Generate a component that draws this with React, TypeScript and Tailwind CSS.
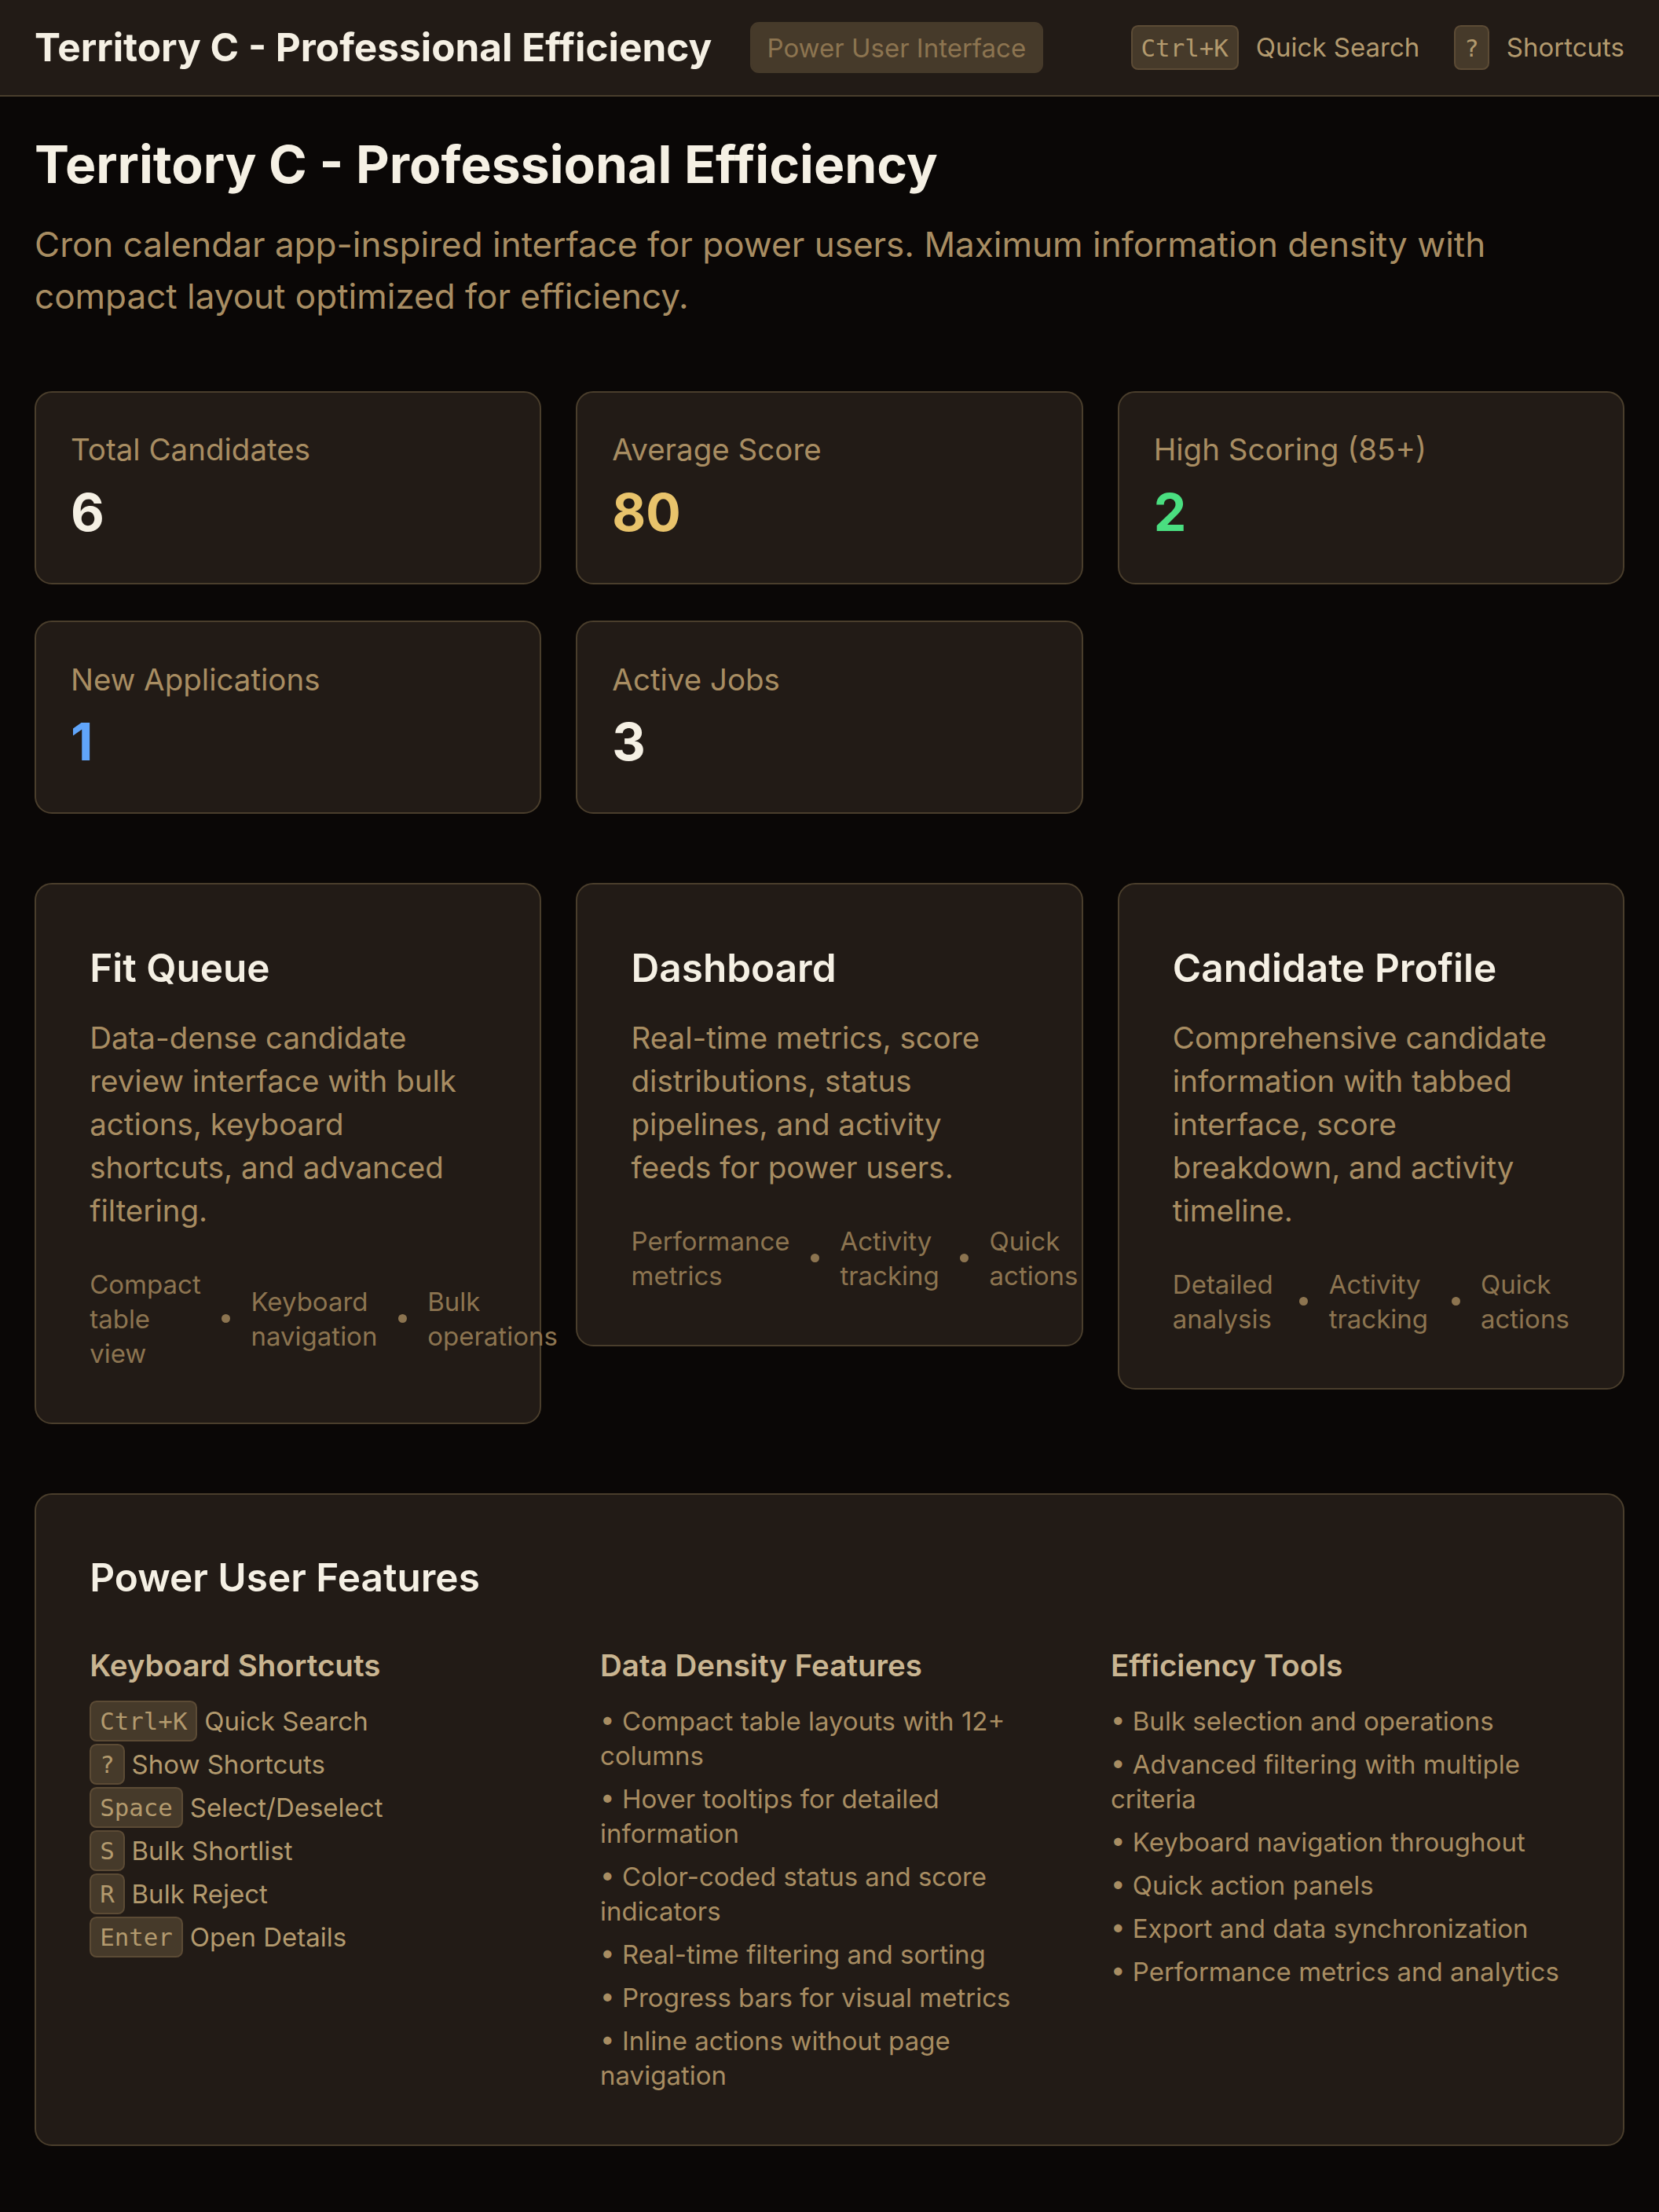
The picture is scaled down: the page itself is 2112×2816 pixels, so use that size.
import React from "react";

interface IStat {
    label: string;
    value: string;
    tone: string;
}

interface IView {
    title: string;
    description: string;
    tags: string[];
}

const stats: IStat[] = [
    { label: "Total Candidates", value: "6", tone: "text-[#f5f0e4]" },
    { label: "Average Score", value: "80", tone: "text-[#e8c36b]" },
    { label: "High Scoring (85+)", value: "2", tone: "text-[#4ade80]" },
    { label: "New Applications", value: "1", tone: "text-[#60a5fa]" },
    { label: "Active Jobs", value: "3", tone: "text-[#f5f0e4]" },
];

const views: IView[] = [
    {
        title: "Fit Queue",
        description:
            "Data-dense candidate review interface with bulk actions, keyboard shortcuts, and advanced filtering.",
        tags: ["Compact table view", "Keyboard navigation", "Bulk operations"],
    },
    {
        title: "Dashboard",
        description:
            "Real-time metrics, score distributions, status pipelines, and activity feeds for power users.",
        tags: ["Performance metrics", "Activity tracking", "Quick actions"],
    },
    {
        title: "Candidate Profile",
        description:
            "Comprehensive candidate information with tabbed interface, score breakdown, and activity timeline.",
        tags: ["Detailed analysis", "Activity tracking", "Quick actions"],
    },
];

const shortcuts: [string, string][] = [
    ["Ctrl+K", "Quick Search"],
    ["?", "Show Shortcuts"],
    ["Space", "Select/Deselect"],
    ["S", "Bulk Shortlist"],
    ["R", "Bulk Reject"],
    ["Enter", "Open Details"],
];

const density = [
    "Compact table layouts with 12+ columns",
    "Hover tooltips for detailed information",
    "Color-coded status and score indicators",
    "Real-time filtering and sorting",
    "Progress bars for visual metrics",
    "Inline actions without page navigation",
];

const tools = [
    "Bulk selection and operations",
    "Advanced filtering with multiple criteria",
    "Keyboard navigation throughout",
    "Quick action panels",
    "Export and data synchronization",
    "Performance metrics and analytics",
];

const Kbd: React.FC<{ children: React.ReactNode; className?: string }> = ({ children, className }) => (
    <kbd
        className={`shrink-0 rounded-[4px] border border-[#5c4b35] bg-[#463a2a] px-[5px] font-['DejaVu_Sans_Mono',monospace] text-sm leading-5 text-[#b39a6e] ${className ?? ""}`}
    >
        {children}
    </kbd>
);

const BulletList: React.FC<{ items: string[] }> = ({ items }) => (
    <ul className="flex flex-col gap-[5px] text-[15px] leading-5 text-[#a88d62]">
        {items.map((item) => (
            <li key={item}>• {item}</li>
        ))}
    </ul>
);

const App: React.FC = () => {
    return (
        <div className="min-h-[1280px] bg-[#0a0706] font-['Inter',sans-serif] [zoom:2.2]">
            <header className="flex h-14 items-center border-b border-[#4a3e2c] bg-[#221b16] px-5">
                <div className="flex items-center gap-[22px]">
                    <h1 className="text-[22.5px] font-bold text-[#f5f0e4]">Territory C - Professional Efficiency</h1>
                    <span className="rounded-[5px] border border-[#463a2a] bg-[#463a2a] px-[9px] py-[4px] text-[15px] leading-5 text-[#8c7450]">
                        Power User Interface
                    </span>
                </div>
                <div className="ml-auto flex items-center gap-5 text-[15px] text-[#b39a6e]">
                    <div className="flex items-center gap-2.5">
                        <Kbd className="py-0.5">Ctrl+K</Kbd>
                        <span>Quick Search</span>
                    </div>
                    <div className="flex items-center gap-2.5">
                        <Kbd className="py-0.5">?</Kbd>
                        <span>Shortcuts</span>
                    </div>
                </div>
            </header>

            <main className="px-5 pt-[21.5px] pb-10">
                <h2 className="mb-[13px] text-3xl font-bold text-[#f5f0e4]">Territory C - Professional Efficiency</h2>
                <p className="mb-10 max-w-[880px] text-xl leading-[30px] text-[#a88d62]">
                    Cron calendar app-inspired interface for power users. Maximum information density with
                    compact layout optimized for efficiency.
                </p>

                <div className="mb-10 grid grid-cols-3 gap-x-5 gap-y-[21px]">
                    {stats.map((stat) => (
                        <div
                            key={stat.label}
                            className="rounded-[10px] border border-[#4a3e2c] bg-[#221b16] px-5 py-[21px]"
                        >
                            <div className="text-[17.5px] leading-6 text-[#a88d62]">{stat.label}</div>
                            <div className={`mt-1 text-3xl leading-10 font-bold ${stat.tone}`}>{stat.value}</div>
                        </div>
                    ))}
                </div>

                <div className="mb-10 grid grid-cols-3 items-start gap-5">
                    {views.map((view) => (
                        <div
                            key={view.title}
                            className="rounded-[10px] border border-[#4a3e2c] bg-[#221b16] px-[31px] pt-8 pb-[30px]"
                        >
                            <h3 className="mb-3 text-[22.5px] leading-8 font-semibold text-[#f5f0e4]">
                                {view.title}
                            </h3>
                            <p className="text-[17.5px] leading-[25px] text-[#a88d62]">{view.description}</p>
                            <div className="mt-5 flex items-center gap-3 text-[15px] leading-5 text-[#8c7450]">
                                {view.tags.map((tag, i) => (
                                    <React.Fragment key={tag}>
                                        {i > 0 && <span className="size-[5px] shrink-0 rounded-full bg-[#8c7450]" />}
                                        <span>{tag}</span>
                                    </React.Fragment>
                                ))}
                            </div>
                        </div>
                    ))}
                </div>

                <section className="rounded-[10px] border border-[#4a3e2c] bg-[#221b16] px-[31px] pt-8 pb-[30px]">
                    <h3 className="mb-[21px] text-[22.5px] leading-8 font-semibold text-[#f5f0e4]">
                        Power User Features
                    </h3>
                    <div className="grid grid-cols-3 gap-[30px]">
                        <div>
                            <h4 className="mb-2 text-[17.5px] leading-7 font-semibold text-[#c9b591]">
                                Keyboard Shortcuts
                            </h4>
                            <div className="flex flex-col gap-[5px] text-[15px] text-[#b39a6e]">
                                {shortcuts.map(([key, label]) => (
                                    <div key={key} className="flex h-5 items-center gap-1">
                                        <Kbd className="py-px">{key}</Kbd>
                                        <span className="leading-5">{label}</span>
                                    </div>
                                ))}
                            </div>
                        </div>
                        <div>
                            <h4 className="mb-2 text-[17.5px] leading-7 font-semibold text-[#c9b591]">
                                Data Density Features
                            </h4>
                            <BulletList items={density} />
                        </div>
                        <div>
                            <h4 className="mb-2 text-[17.5px] leading-7 font-semibold text-[#c9b591]">
                                Efficiency Tools
                            </h4>
                            <BulletList items={tools} />
                        </div>
                    </div>
                </section>
            </main>
        </div>
    );
};

export default App;
